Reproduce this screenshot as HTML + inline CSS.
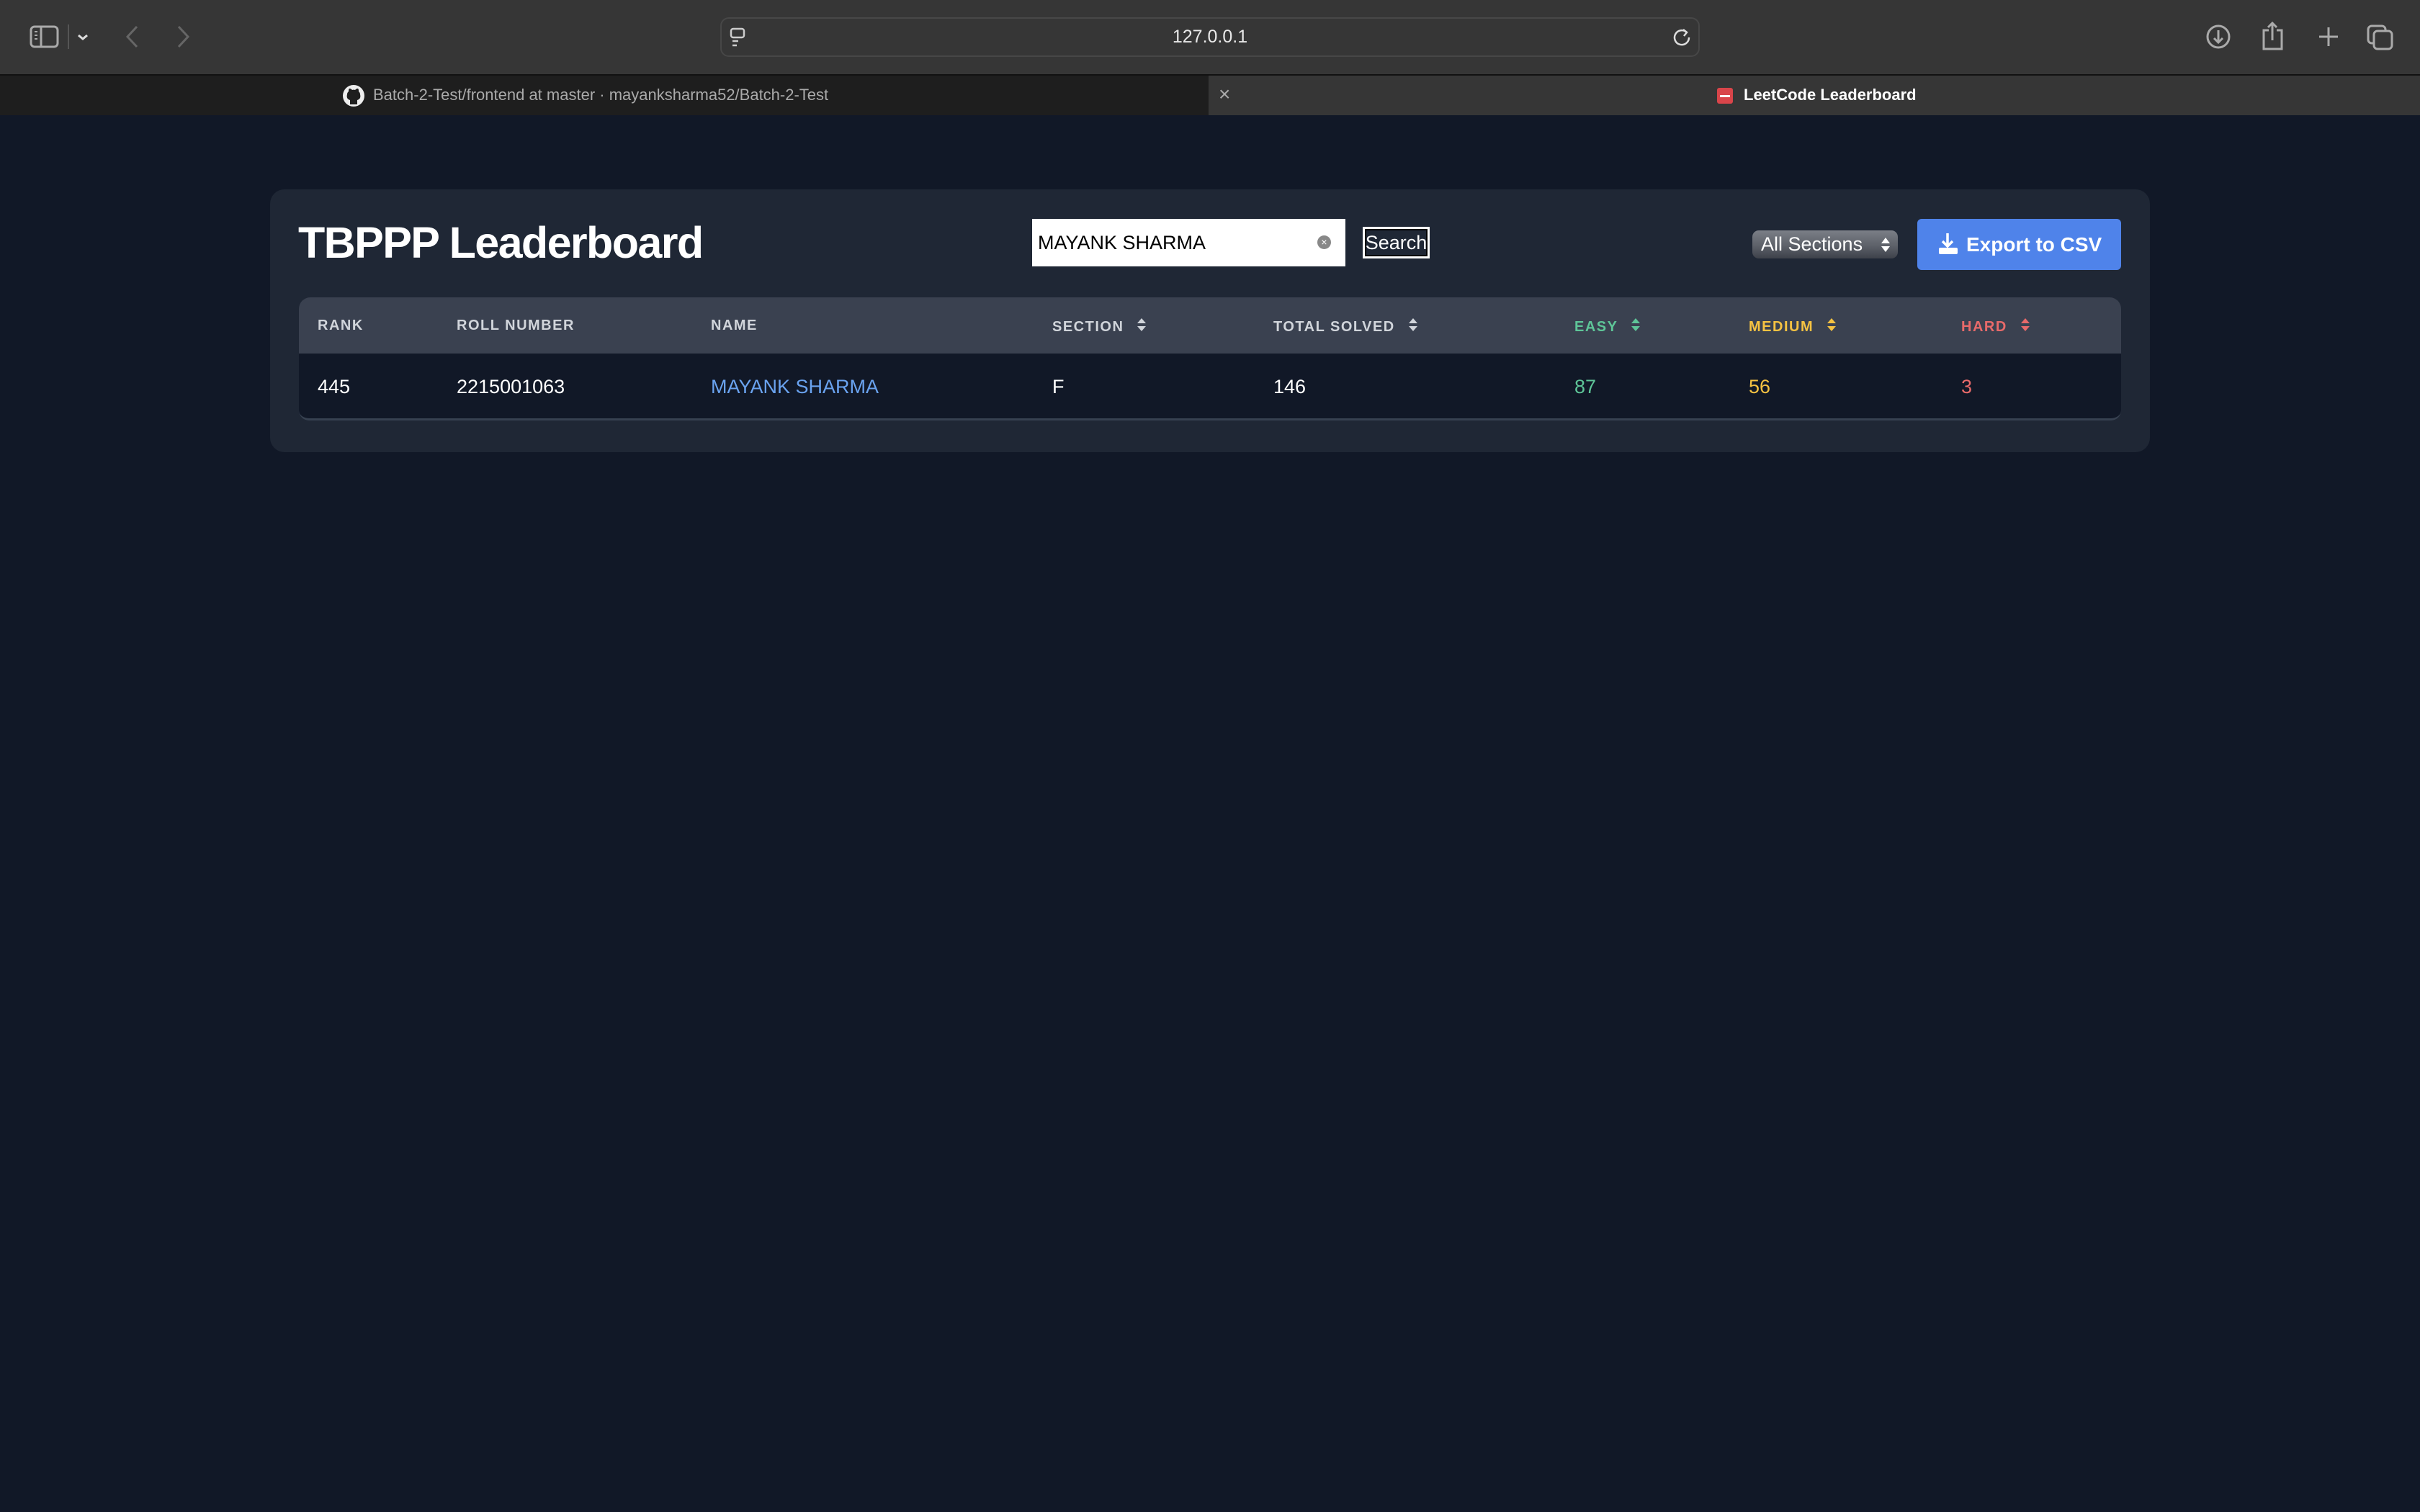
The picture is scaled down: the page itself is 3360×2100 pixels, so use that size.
<!DOCTYPE html>
<html><head><meta charset="utf-8"><style>
*{margin:0;padding:0;box-sizing:border-box}
body{width:3360px;height:2100px;background:#111827;font-family:"Liberation Sans",sans-serif;position:relative;overflow:hidden}
.abs{position:absolute}
.tool{left:0;top:0;width:3360px;height:103px;background:#363636}
.tabs{left:0;top:103px;width:3360px;height:57px;background:#363636;border-top:2px solid #111}
.tab1{left:0;top:105px;width:1678px;height:55px;background:#1e1e1e}
.url{left:1000px;top:24px;width:1360px;height:55px;border:2px solid #474747;border-radius:12px;background:#363636;color:#e8e8e8;font-size:25px;text-align:center;line-height:51px}
.card{left:375px;top:263px;width:2610px;height:365px;background:#1f2735;border-radius:20px}
h1{position:absolute;left:414px;top:302px;font-size:61px;color:#fff;font-weight:bold;letter-spacing:-1.6px}
.inp{left:1433px;top:304px;width:435px;height:66px;background:#fff;color:#000;font-size:27px;line-height:66px;padding-left:8px}
.sbtn{left:1892px;top:315px;width:93px;height:44px;border:3px solid #fff;color:#fff;font-size:27px;line-height:38px;text-align:center;outline:2px solid #000;outline-offset:-5px}
.sel{left:2433px;top:320px;width:202px;height:39px;border-radius:9px;background:linear-gradient(#7b7f87,#5d6169 55%,#3d414a);color:#fff;font-size:27px;line-height:38px;padding-left:12px}
.exp{left:2662px;top:304px;width:283px;height:71px;background:#4f83ea;border-radius:6px;color:#fff;font-size:28px;font-weight:bold;line-height:71px;padding-left:68px}
.thead{left:415px;top:413px;width:2530px;height:78px;background:#3a4150;border-radius:16px 16px 0 0}
.trow{left:415px;top:491px;width:2530px;height:93px;background:#111827;border-bottom:3px solid #374151;border-radius:0 0 14px 14px}
.th{top:441px;font-size:20px;letter-spacing:1.5px;color:#d1d5db;font-weight:bold}
.td{top:522px;font-size:27px;color:#fff}
.arr{display:inline-block;margin-left:18px;vertical-align:-1px}
</style></head><body>
<div class="abs tool"></div>
<svg class="abs" style="left:40px;top:34px" width="100" height="34"><rect x="3" y="3" width="37" height="28" rx="5" fill="none" stroke="#aaa" stroke-width="3"/><line x1="17" y1="3" x2="17" y2="31" stroke="#aaa" stroke-width="3"/><line x1="8" y1="10" x2="12" y2="10" stroke="#aaa" stroke-width="2"/><line x1="8" y1="15" x2="12" y2="15" stroke="#aaa" stroke-width="2"/><line x1="8" y1="20" x2="12" y2="20" stroke="#aaa" stroke-width="2"/><line x1="55" y1="0" x2="55" y2="36" stroke="#555" stroke-width="2"/><polyline points="69,15 75,20 81,15" fill="none" stroke="#ddd" stroke-width="3"/></svg>
<svg class="abs" style="left:170px;top:34px" width="100" height="34"><polyline points="20,3 7,17 20,31" fill="none" stroke="#666" stroke-width="3"/><polyline points="78,3 91,17 78,31" fill="none" stroke="#666" stroke-width="3"/></svg>
<div class="abs url">127.0.0.1</div>
<svg class="abs" style="left:1013px;top:38px" width="24" height="28"><rect x="2" y="2" width="18" height="12" rx="3" fill="none" stroke="#ccc" stroke-width="2.5"/><line x1="4" y1="19" x2="12" y2="19" stroke="#ccc" stroke-width="2.5"/><line x1="4" y1="25" x2="10" y2="25" stroke="#ccc" stroke-width="2.5"/></svg>
<svg class="abs" style="left:2320px;top:36px" width="30" height="32"><path d="M22 9 A10 10 0 1 0 25 16" fill="none" stroke="#ddd" stroke-width="2.5"/><polyline points="17,5 22,9 18,14" fill="none" stroke="#ddd" stroke-width="2.5"/></svg>
<svg class="abs" style="left:3055px;top:28px" width="300" height="46"><circle cx="25" cy="23" r="15" fill="none" stroke="#aaa" stroke-width="3"/><line x1="25" y1="14" x2="25" y2="31" stroke="#aaa" stroke-width="3"/><polyline points="19,25 25,31 31,25" fill="none" stroke="#aaa" stroke-width="3"/><path d="M95 14 H88 V40 H113 V14 H106" fill="none" stroke="#aaa" stroke-width="3"/><line x1="100" y1="4" x2="100" y2="28" stroke="#aaa" stroke-width="3"/><polyline points="94,10 100,4 106,10" fill="none" stroke="#aaa" stroke-width="3"/><line x1="165" y1="23" x2="191" y2="23" stroke="#aaa" stroke-width="3"/><line x1="178" y1="10" x2="178" y2="36" stroke="#aaa" stroke-width="3"/><rect x="233" y="8" width="24" height="24" rx="5" fill="none" stroke="#aaa" stroke-width="3"/><rect x="241" y="15" width="25" height="25" rx="5" fill="#363636" stroke="#aaa" stroke-width="3"/></svg>
<div class="abs tabs"></div>
<div class="abs tab1"></div>
<svg class="abs" style="left:475px;top:117px" width="32" height="32"><circle cx="16" cy="16" r="15" fill="#eee"/><path d="M11 28 V22 C7 21 6 18 7 14 C7 12 8 11 9 10 C9 8 9 7 10 6 C12 6 13 7 14 8 C15 7.5 17 7.5 18 8 C19 7 20 6 22 6 C23 7 23 8 23 10 C24 11 25 12 25 14 C26 18 25 21 21 22 V28 Z" fill="#1e1e1e"/></svg>
<div class="abs" style="left:518px;top:119px;font-size:22px;color:#aaa">Batch-2-Test/frontend at master · mayanksharma52/Batch-2-Test</div>
<div class="abs" style="left:1692px;top:115px;font-size:28px;color:#aaa">×</div>
<div class="abs" style="left:2384px;top:122px;width:22px;height:22px;background:#d9454a;border-radius:3px"><div style="margin:10px 4px 0;height:3px;background:#fff"></div></div>
<div class="abs" style="left:2421px;top:119px;font-size:22px;color:#fff;font-weight:bold">LeetCode Leaderboard</div>

<div class="abs card"></div>
<h1>TBPPP Leaderboard</h1>
<div class="abs inp">MAYANK SHARMA</div>
<div class="abs" style="left:1829px;top:327px;width:19px;height:19px;border-radius:50%;background:#888;color:#fff;font-size:14px;line-height:19px;text-align:center">×</div>
<div class="abs sbtn">Search</div>
<div class="abs sel">All Sections<svg style="position:absolute;right:10px;top:9px" width="14" height="22"><polygon points="7,1 13,9 1,9" fill="#fff"/><polygon points="1,13 13,13 7,21" fill="#fff"/></svg></div>
<div class="abs exp">Export to CSV</div>
<svg class="abs" style="left:2690px;top:322px" width="30" height="34"><line x1="14" y1="2" x2="14" y2="20" stroke="#fff" stroke-width="3.5"/><polyline points="7,13 14,20 21,13" fill="none" stroke="#fff" stroke-width="3.5"/><rect x="2" y="22" width="26" height="9" rx="2" fill="#fff"/></svg>

<div class="abs thead"></div>
<div class="abs trow"></div>
<div class="abs th" style="left:441px">RANK</div>
<div class="abs th" style="left:634px">ROLL NUMBER</div>
<div class="abs th" style="left:987px">NAME</div>
<div class="abs th" style="left:1461px">SECTION<svg class="arr" width="14" height="20"><polygon points="7,1 13,8 1,8" fill="#d1d5db"/><polygon points="1,12 13,12 7,19" fill="#d1d5db"/></svg></div>
<div class="abs th" style="left:1768px">TOTAL SOLVED<svg class="arr" width="14" height="20"><polygon points="7,1 13,8 1,8" fill="#d1d5db"/><polygon points="1,12 13,12 7,19" fill="#d1d5db"/></svg></div>
<div class="abs th" style="left:2186px;color:#5ec598">EASY<svg class="arr" width="14" height="20"><polygon points="7,1 13,8 1,8" fill="#5ec598"/><polygon points="1,12 13,12 7,19" fill="#5ec598"/></svg></div>
<div class="abs th" style="left:2428px;color:#f5c242">MEDIUM<svg class="arr" width="14" height="20"><polygon points="7,1 13,8 1,8" fill="#f5c242"/><polygon points="1,12 13,12 7,19" fill="#f5c242"/></svg></div>
<div class="abs th" style="left:2723px;color:#e86a6a">HARD<svg class="arr" width="14" height="20"><polygon points="7,1 13,8 1,8" fill="#e86a6a"/><polygon points="1,12 13,12 7,19" fill="#e86a6a"/></svg></div>
<div class="abs td" style="left:441px">445</div>
<div class="abs td" style="left:634px">2215001063</div>
<div class="abs td" style="left:987px;color:#6aa3f0">MAYANK SHARMA</div>
<div class="abs td" style="left:1461px">F</div>
<div class="abs td" style="left:1768px">146</div>
<div class="abs td" style="left:2186px;color:#5ec598">87</div>
<div class="abs td" style="left:2428px;color:#f5c242">56</div>
<div class="abs td" style="left:2723px;color:#e86a6a">3</div>
</body></html>
